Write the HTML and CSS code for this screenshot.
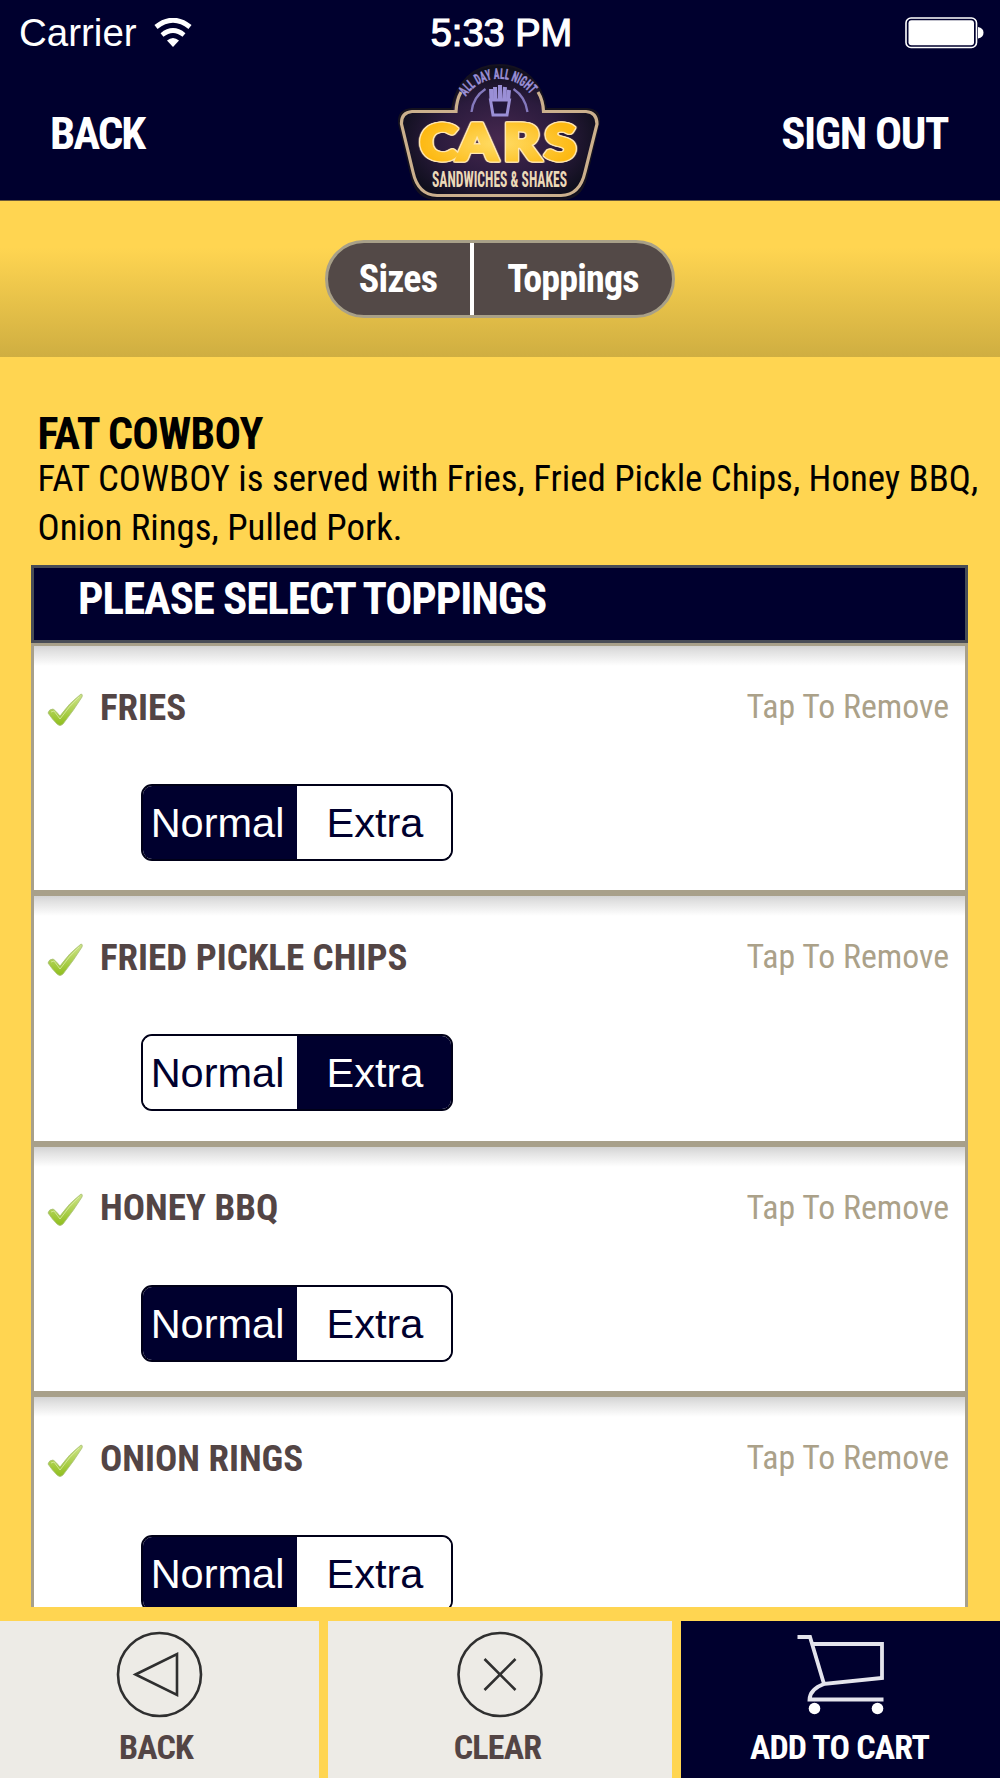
FILE: index.html
```html
<!DOCTYPE html>
<html lang="en">
<head>
    <meta charset="UTF-8">
    <title>Cars Sandwiches &amp; Shakes</title>
    <link rel="stylesheet" href="styles.css">
</head>
<body>
    <div class="header">
        <div class="status-bar">
            <div class="carrier">
                <span>Carrier</span>
                <svg class="wifi" width="38" height="30" viewBox="0 0 38 30">
                    <path d="M2 9 Q19 -4.500 36 9" fill="none" stroke="#fff" stroke-width="5"/>
                    <path d="M8 17 Q19 8 30 17" fill="none" stroke="#fff" stroke-width="4.600"/>
                    <path d="M13 22.500 Q19 17.500 25 22.500 L19 29 Z" fill="#fff"/>
                </svg>
            </div>
            <div class="time">5:33 PM</div>
            <svg class="battery" width="79" height="32" viewBox="0 0 79 32">
                <rect x="1" y="1" width="70.500" height="29.500" rx="5" fill="none" stroke="#fff" stroke-width="1.600"/>
                <rect x="3.500" y="3.300" width="65.500" height="25" rx="3" fill="#fff"/>
                <path d="M73 10 Q78.500 11 78.500 15.700 Q78.500 20.500 73 21.500 Z" fill="#fff"/>
            </svg>
        </div>
        <div class="nav">
            <a class="nav-link">BACK</a>
            <svg class="logo" width="210" height="136" viewBox="0 0 210 136">
                <defs>
                    <radialGradient id="sign" cx="50%" cy="55%" r="52%">
                        <stop offset="0" stop-color="#46284f"/>
                        <stop offset="0.600" stop-color="#2b1b3d"/>
                        <stop offset="1" stop-color="#0f0f1d"/>
                    </radialGradient>
                    <radialGradient id="gold" cx="50%" cy="55%" r="50%">
                        <stop offset="0" stop-color="#ffdc66"/>
                        <stop offset="1" stop-color="#fdb913"/>
                    </radialGradient>
                    <path id="arc" d="M72 32.500 A39.600 39.600 0 0 1 138 32.500"/>
                </defs>
                <path d="M18 45 H58 C62 18 80 1 105 1 C130 1 148 18 152 45 H193 Q206 46 205 58 L192 114 Q187 135 167 135 H43 Q23 135 18 114 L5 59 Q4 46 18 45 Z" fill="url(#sign)" stroke="#15121f" stroke-width="2"/>
                <path d="M67 28 Q62.500 36 62 47.500 H18 Q7 48.500 7.500 60 L19 108 Q24 131 43 131.500 H167 Q186 131 191 108 L203 60 Q203 48.500 192 47.500 H149.500 Q149 36 144 28" fill="none" stroke="#cbb08d" stroke-width="3.200"/>
                <text class="logo-arc"><textPath href="#arc" textLength="75" lengthAdjust="spacingAndGlyphs">ALL DAY ALL NIGHT</textPath></text>
                <path d="M77.500 48 Q79 33 91.500 25 M133.500 48 Q131.500 33 119.500 25" fill="none" stroke="#8479bd" stroke-width="2.300"/>
                <path d="M96.500 36 L99 51 H113 L115.500 36 Z" fill="#22173a" stroke="#9a8fd6" stroke-width="3"/>
                <path d="M97.500 36 L97 25 M101.500 36 L101 23 M106 36 V21 M110 36 L111 23 M114 36 L115 26" fill="none" stroke="#9a8fd6" stroke-width="4"/>
                <text class="logo-name" x="23 56 97 133.500" y="96" transform="scale(1.130 1)">CARS</text>
                <text class="logo-sub" x="38" y="122.500" textLength="135" lengthAdjust="spacingAndGlyphs">SANDWICHES &amp; SHAKES</text>
            </svg>
            <a class="nav-link sign-out">SIGN OUT</a>
        </div>
    </div>

    <div class="tabs">
        <div class="pill">
            <a class="tab-sizes">Sizes</a>
            <a class="tab-toppings">Toppings</a>
        </div>
    </div>

    <div class="item">
        <h1>FAT COWBOY</h1>
        <p>FAT COWBOY is served with Fries, Fried Pickle Chips, Honey BBQ, Onion Rings, Pulled Pork.</p>
    </div>

    <svg width="0" height="0" class="sprites">
        <linearGradient id="green" x1="0" y1="0" x2="0" y2="1">
            <stop offset="0" stop-color="#cfe58a"/>
            <stop offset="1" stop-color="#8fbe1c"/>
        </linearGradient>
        <symbol id="check" viewBox="0 0 36 34">
            <path d="M1 20 Q2 16 6 16 Q8 17 13 23 Q22 10 34 1 Q36 1 35 4 Q27 17 16 31 Q13 34 10 31 Q5 26 1 20 Z" fill="url(#green)" stroke="#a9bf78" stroke-width="0.800"/>
            <path d="M4 19 L7 18 L13 26 Q22 13 32 4" fill="none" stroke="#e3f0b5" stroke-width="0.700"/>
        </symbol>
    </svg>

    <div class="toppings">
        <h2>PLEASE SELECT TOPPINGS</h2>
        <div class="topping">
            <div class="topping-top">
                <svg class="check"><use href="#check"/></svg>
                <span class="name">FRIES</span>
                <span class="remove">Tap To Remove</span>
            </div>
            <div class="amount">
                <button class="active">Normal</button>
                <button>Extra</button>
            </div>
        </div>
        <div class="topping">
            <div class="topping-top">
                <svg class="check"><use href="#check"/></svg>
                <span class="name">FRIED PICKLE CHIPS</span>
                <span class="remove">Tap To Remove</span>
            </div>
            <div class="amount">
                <button>Normal</button>
                <button class="active">Extra</button>
            </div>
        </div>
        <div class="topping">
            <div class="topping-top">
                <svg class="check"><use href="#check"/></svg>
                <span class="name">HONEY BBQ</span>
                <span class="remove">Tap To Remove</span>
            </div>
            <div class="amount">
                <button class="active">Normal</button>
                <button>Extra</button>
            </div>
        </div>
        <div class="topping">
            <div class="topping-top">
                <svg class="check"><use href="#check"/></svg>
                <span class="name">ONION RINGS</span>
                <span class="remove">Tap To Remove</span>
            </div>
            <div class="amount">
                <button class="active">Normal</button>
                <button>Extra</button>
            </div>
        </div>
    </div>

    <div class="footer">
        <a class="footer-btn back">
            <svg width="88" height="88" viewBox="0 0 88 88" fill="none" stroke="#2f2f2f" stroke-width="2.600">
                <circle cx="43.500" cy="43.500" r="41.500"/>
                <path d="M19.500 43.500 L61 23 V64 Z"/>
            </svg>
            <span>BACK</span>
        </a>
        <a class="footer-btn clear">
            <svg width="88" height="88" viewBox="0 0 88 88" fill="none" stroke="#2f2f2f" stroke-width="2.600">
                <circle cx="44" cy="43.500" r="41.500"/>
                <path d="M28.500 28 L59.500 59 M59.500 28 L28.500 59"/>
            </svg>
            <span>CLEAR</span>
        </a>
        <a class="footer-btn cart">
            <svg width="88" height="88" viewBox="0 0 88 88" fill="none" stroke="#e4e4ec" stroke-width="3.800">
                <path d="M0.500 6 H13 L27 53 L85 47 V13 H15"/>
                <path d="M27 53 Q13 58 12.500 68.500 H86.500"/>
                <circle cx="17.500" cy="77.500" r="5.800" fill="#fff" stroke="none"/>
                <circle cx="80.500" cy="77.500" r="5.800" fill="#fff" stroke="none"/>
            </svg>
            <span>ADD TO CART</span>
        </a>
    </div>
</body>
</html>
```
FILE: styles.css
```css
* {
    box-sizing: border-box;
}

body {
    margin: 0;
    width: 1000px;
    height: 1778px;
    overflow: hidden;
    display: flex;
    flex-direction: column;
    background-color: #ffd551;
    font-family: "Roboto Condensed", Roboto, sans-serif;
    font-stretch: 75%;
}

.header {
    height: 201px;
    background-color: #00002e;
    color: white;
    border-bottom: 1px solid #6b5a3a;
}

.status-bar {
    height: 64px;
    display: grid;
    grid-template-columns: 1fr auto 1fr;
    align-items: center;
    padding: 2px 16px 0 19px;
    font-family: "Liberation Sans", Arial, sans-serif;
    font-stretch: normal;
    font-size: 38px;
}

.carrier {
    display: flex;
    align-items: center;
    gap: 17px;
    font-size: 38.5px;
}

.time {
    -webkit-text-stroke: 1.2px white;
}

.battery {
    justify-self: end;
}

.nav {
    height: 136px;
    display: grid;
    grid-template-columns: 1fr 210px 1fr;
    padding: 0 52px 0 50px;
}

.nav-link {
    font-size: 45px;
    font-weight: 700;
    line-height: 140px;
    letter-spacing: -2px;
}

.sign-out {
    text-align: right;
    letter-spacing: -1.4px;
}

.logo {
    display: block;
}

.logo-name {
    font-family: Lato, sans-serif;
    font-stretch: normal;
    font-weight: 900;
    font-size: 50px;
    fill: url(#gold);
    stroke: url(#gold);
    stroke-width: 3px;
    filter: drop-shadow(1px 0 0 #ffe6b0) drop-shadow(-1px 0 0 #ffe6b0) drop-shadow(0 1px 0 #ffe6b0) drop-shadow(0 -1px 0 #ffe6b0);
}

.logo-sub {
    font-weight: 700;
    font-size: 21.5px;
    fill: #ecd9b8;
}

.logo-arc {
    font-weight: 700;
    font-size: 14.5px;
    fill: #9a8fd6;
    stroke: #9a8fd6;
    stroke-width: 0.4px;
}

.tabs {
    height: 156px;
    display: flex;
    justify-content: center;
    padding-top: 39px;
    background: linear-gradient(#ffd551 30%, #cfae41);
}

.pill {
    width: 350px;
    height: 78px;
    display: flex;
    border: 3px solid #a8a088;
    border-radius: 39px;
    background-color: #534947;
    color: white;
    font-size: 38px;
    font-weight: 700;
    letter-spacing: -0.8px;
    line-height: 72px;
    text-align: center;
}

.tab-sizes {
    width: 146px;
    padding-right: 2px;
    border-right: 4px solid white;
}

.tab-toppings {
    flex: 1;
}

.item {
    height: 208px;
    padding: 52px 0 0 37.5px;
}

.item h1 {
    margin: 0;
    font-size: 44px;
    letter-spacing: -0.7px;
    line-height: 50px;
}

.item p {
    margin: -4px 0 0;
    font-size: 36.85px;
    line-height: 48.5px;
}

.sprites {
    position: absolute;
}

.toppings {
    height: 1042px;
    margin: 0 32px 0 31px;
    overflow: hidden;
}

.toppings h2 {
    height: 78px;
    margin: 0;
    padding-left: 44px;
    border: 3px solid #484c56;
    background-color: #00002e;
    color: white;
    font-size: 45px;
    letter-spacing: -1.1px;
    line-height: 61px;
}

.topping {
    height: 250.400px;
    border: 3px solid #a8a08a;
    background: linear-gradient(#d3d3d3, #e2e2e2 6px, #fff 20px);
}

.topping-top {
    height: 121px;
    display: flex;
    align-items: center;
    padding: 0 16px 0 13px;
}

.check {
    width: 36px;
    height: 34px;
    margin-top: 6px;
}

.name {
    margin: 1px 0 0 17px;
    font-size: 37px;
    font-weight: 700;
    color: #534545;
}

.remove {
    margin-left: auto;
    font-size: 33.8px;
    color: #aba189;
}

.amount {
    width: 312px;
    height: 77px;
    display: flex;
    margin: 17px 0 0 107px;
    border: 2px solid #000018;
    border-radius: 11px;
    overflow: hidden;
}

.amount button {
    width: 154px;
    padding: 1px 0 0;
    border: none;
    background-color: white;
    color: #00002e;
    font-family: "Liberation Sans", Arial, sans-serif;
    font-size: 41.5px;
}

.amount button:first-child {
    padding-right: 5px;
}

.amount button:last-child {
    padding-left: 2px;
}

.amount .active {
    background-color: #00002e;
    color: white;
}

.footer {
    height: 157px;
    margin-top: 14px;
    display: flex;
    gap: 9px;
}

.footer-btn {
    width: 319px;
    display: flex;
    flex-direction: column;
    align-items: center;
    padding-top: 10px;
    background-color: #edebe6;
    color: #534545;
    font-size: 34px;
    font-weight: 700;
    letter-spacing: -0.8px;
    line-height: 40px;
}

.footer-btn span {
    margin-top: 8px;
}

.back span {
    padding-right: 7px;
}

.clear {
    width: 344px;
}

.clear span {
    padding-right: 5px;
}

.cart {
    background-color: #00002e;
    color: white;
}

.cart span {
    padding-right: 2px;
}
```
